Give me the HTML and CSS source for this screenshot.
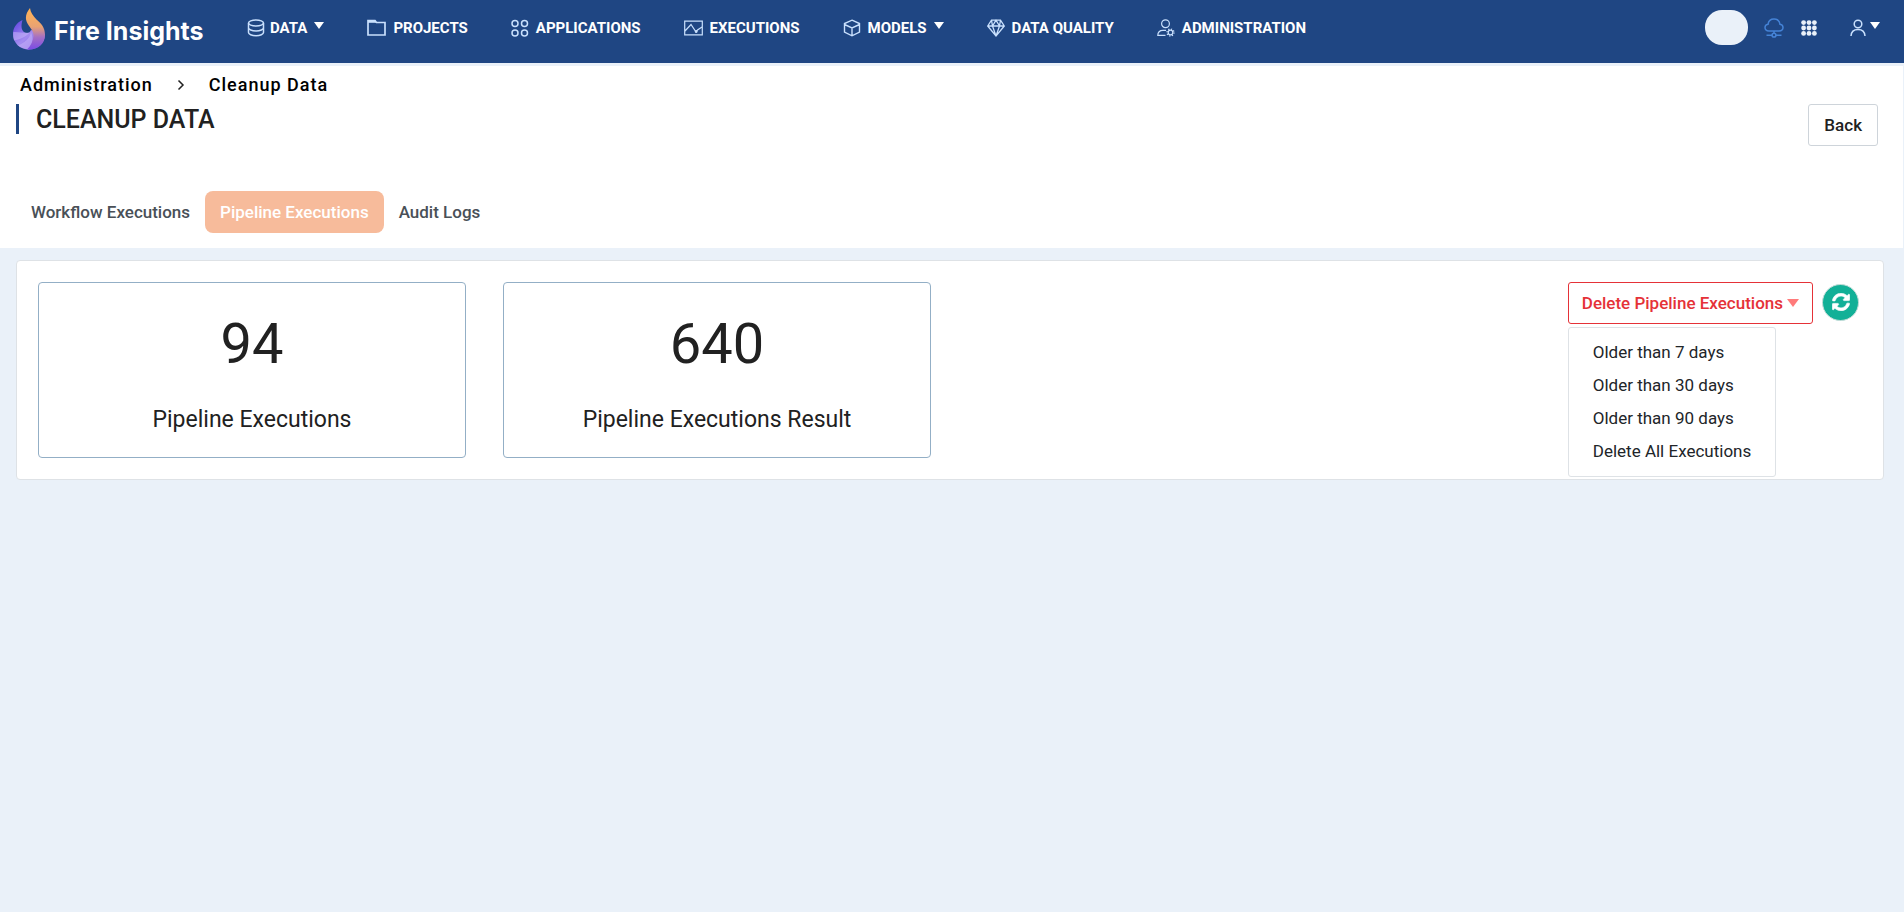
FILE: index.html
```html
<!DOCTYPE html>
<html lang="en">
<head>
<meta charset="utf-8">
<title>Fire Insights - Cleanup Data</title>
<meta name="viewport" content="width=device-width, initial-scale=1">
<link rel="stylesheet" href="styles.css">
</head>
<body>
<header class="topbar">
  <a class="brand" href="#">
    <svg class="brand-logo" width="34" height="42" viewBox="0 0 34 42" aria-hidden="true">
      <defs>
        <linearGradient id="flame" x1="0" y1="0" x2="0" y2="1">
          <stop offset="0" stop-color="#ffb454"/><stop offset=".45" stop-color="#e9a272"/><stop offset=".7" stop-color="#a56fc4"/><stop offset="1" stop-color="#7a4be6"/>
        </linearGradient>
        <linearGradient id="bowl" x1="0" y1="0" x2="1" y2="1">
          <stop offset="0" stop-color="#5a3fe0"/><stop offset=".5" stop-color="#a48cf0"/><stop offset="1" stop-color="#8458e0"/>
        </linearGradient>
      </defs>
      <path fill="url(#bowl)" d="M10.500 12C4 15 1 20 1 26c0 9 7 15.500 16 15.500S33 35 33 26L19 22c-1 3-4 4-7 2-3-2.500-3-7-1.500-12z"/>
      <path fill="#cbbbfa" opacity=".5" d="M1.300 24c4-.5 9 1 16 .8-3 4-10 7-15.200 7.700-1-2.500-1.200-5.500-.8-8.500z"/>
      <path fill="#c4b2f8" opacity=".55" d="M6 37.500c6-2.500 11.500-6.500 13-13 2.500 5 2 11.500-2 17-4.500-.2-8.500-1.700-11-4z"/>
      <path fill="url(#flame)" d="M18 0c-4 5-5.500 10-2.500 15.500 3 5 6.500 8 6 13-.5 4.500-2.500 9-6.500 13 10 1 18-5 18-14.500 0-8-4-11.500-8.500-15.500C21 7.500 18.500 4.500 18 0z"/>
    </svg>
    <span class="brand-name">Fire Insights</span>
  </a>
  <nav class="main-nav" aria-label="Main">
    <a class="nav-link nav-link-tight" href="#">
      <svg class="icon" width="18" height="18" viewBox="0 0 18 18"><ellipse cx="9" cy="4" rx="7.500" ry="3"/><path d="M1.500 4v9.500c0 1.700 3.300 3.200 7.500 3.200s7.500-1.500 7.500-3.200V4M1.500 8.700c0 1.700 3.300 3.200 7.500 3.200s7.500-1.500 7.500-3.200"/></svg>
      <span>DATA</span><i class="caret caret-data"></i>
    </a>
    <a class="nav-link" href="#">
      <svg class="icon" width="19" height="18" viewBox="0 0 19 18"><path stroke-width="1.700" d="M1 16V1.500h7L9.500 3.500H18V16z"/><path stroke-width="2" d="M1 2.800h8"/></svg>
      <span>PROJECTS</span>
    </a>
    <a class="nav-link" href="#">
      <svg class="icon" width="18" height="18" viewBox="0 0 18 18"><circle cx="4" cy="4.500" r="3"/><circle cx="13.500" cy="4.500" r="3"/><circle cx="4" cy="14" r="3"/><circle cx="13.500" cy="14" r="3"/></svg>
      <span>APPLICATIONS</span>
    </a>
    <a class="nav-link" href="#">
      <svg class="icon" width="19" height="16" viewBox="0 0 19 16"><path stroke-width="1.200" d="M.7 1.200h17.600v13.600H.7zM1 11l6-6.500 5 7.500 1.500-2L18 7"/><circle cx="12.200" cy="11.500" r=".7"/></svg>
      <span>EXECUTIONS</span>
    </a>
    <a class="nav-link" href="#">
      <svg class="icon" width="18" height="18" viewBox="0 0 18 18"><path stroke-width="1.400" d="M9 1.200l7.500 3.300v8.500L9 16.800 1.500 13V4.500zM1.500 5.500L9 9l7.500-3.500M9 9v7.800"/></svg>
      <span>MODELS</span><i class="caret"></i>
    </a>
    <a class="nav-link" href="#">
      <svg class="icon" width="18" height="18" viewBox="0 0 18 18"><path stroke-width="1.300" d="M4.500 1.200h9L17.300 7 9 17 .7 7zM.7 7h16.600M5.500 7L9 17l3.500-10L9 1.200zM4.500 1.200l1 5.800M13.500 1.200l-1 5.800"/></svg>
      <span>DATA QUALITY</span>
    </a>
    <a class="nav-link" href="#">
      <svg class="icon" width="18" height="18" viewBox="0 0 18 18"><g stroke-width="1.200"><circle cx="8.500" cy="4.700" r="3.900"/><path d="M8.500 16.400H.8c0-3.500 2-5.100 5.200-5.100h3"/><circle cx="13.500" cy="13.500" r="2.300"/></g><circle cx="13.500" cy="13.500" r="3.500" stroke-width="1.300" stroke-dasharray="1.200 1.550"/></svg>
      <span>ADMINISTRATION</span>
    </a>
  </nav>
  <div class="tools">
    <button class="pill" type="button" aria-label="Status"></button>
    <button class="tool" type="button" aria-label="Cloud">
      <svg class="cloud" width="20" height="20" viewBox="0 0 20 20"><path d="M5 13C2.500 13 1 11.500 1 9.600 1 7.800 2.300 6.500 4 6.300 4.500 3 7 1 10 1s5.500 2 6 5.300c1.700.2 3 1.500 3 3.300C19 11.500 17.500 13 15 13zM10 13v2.500M2.500 17.200h5.700M11.800 17.200h5.700"/><circle cx="10" cy="17.200" r="1.900"/></svg>
    </button>
    <button class="tool" type="button" aria-label="Apps">
      <svg class="dots" width="16" height="16" viewBox="0 0 16 16"><circle cx="2.600" cy="2.600" r="2.400"/><circle cx="8" cy="2.600" r="2.400"/><circle cx="13.400" cy="2.600" r="2.400"/><circle cx="2.600" cy="8" r="2.400"/><circle cx="8" cy="8" r="2.400"/><circle cx="13.400" cy="8" r="2.400"/><circle cx="2.600" cy="13.400" r="2.400"/><circle cx="8" cy="13.400" r="2.400"/><circle cx="13.400" cy="13.400" r="2.400"/></svg>
    </button>
    <button class="tool account" type="button" aria-label="Account">
      <svg class="icon" width="16" height="18" viewBox="0 0 16 18"><circle cx="8" cy="5" r="3.800"/><path d="M1 17c.3-4.500 3-6.500 7-6.500s6.700 2 7 6.500"/></svg>
      <i class="caret"></i>
    </button>
  </div>
</header>

<section class="page-head">
  <nav class="breadcrumb" aria-label="Breadcrumb">
    <a href="#">Administration</a>
    <svg class="crumb-arrow" width="8" height="12" viewBox="0 0 8 12" aria-hidden="true"><path d="M1.500 1.500L6 6l-4.500 4.500"/></svg>
    <span>Cleanup Data</span>
  </nav>
  <div class="title-row">
    <h1 class="title">CLEANUP DATA</h1>
    <button class="back" type="button">Back</button>
  </div>
  <div class="tabs" role="tablist">
    <button class="tab" type="button" role="tab">Workflow Executions</button>
    <button class="tab tab-active" type="button" role="tab" aria-selected="true">Pipeline Executions</button>
    <button class="tab" type="button" role="tab">Audit Logs</button>
  </div>
</section>

<main class="panel">
  <div class="cards">
    <article class="card"><p class="count">94</p><h2 class="label">Pipeline Executions</h2></article>
    <article class="card"><p class="count">640</p><h2 class="label">Pipeline Executions Result</h2></article>
  </div>
  <div class="actions">
    <div class="dropdown">
      <button class="delete" type="button" aria-expanded="true"><span>Delete Pipeline Executions</span><i class="caret caret-red"></i></button>
      <div class="menu" role="menu">
        <a class="menu-item" role="menuitem" href="#">Older than 7 days</a>
        <a class="menu-item" role="menuitem" href="#">Older than 30 days</a>
        <a class="menu-item" role="menuitem" href="#">Older than 90 days</a>
        <a class="menu-item" role="menuitem" href="#">Delete All Executions</a>
      </div>
    </div>
    <button class="refresh" type="button" aria-label="Refresh">
      <svg width="18" height="18" viewBox="0 0 512 512" aria-hidden="true"><path fill="#fff" stroke="#fff" stroke-width="18" d="M370.700 133.300C339.500 104 298.900 88 255.800 88c-77.500.1-144.300 53.200-162.800 126.900-1.300 5.400-6.100 9.100-11.700 9.100H24.100c-7.500 0-13.200-6.800-11.800-14.200C33.900 94.900 134.800 8 256 8c66.400 0 126.800 26.100 171.300 68.700L463 41C478.100 25.900 504 36.600 504 57.900V192c0 13.300-10.700 24-24 24H345.900c-21.400 0-32.100-25.900-17-41l41.800-41.700zM32 296h134.100c21.400 0 32.100 25.900 17 41l-41.800 41.800c31.300 29.300 71.800 45.300 114.900 45.300 77.400-.1 144.300-53.100 162.800-126.800 1.300-5.400 6.100-9.100 11.700-9.100h57.300c7.500 0 13.200 6.800 11.800 14.200C478.100 417.100 377.200 504 256 504c-66.400 0-126.800-26.100-171.300-68.700L49 471C33.900 486.100 8 475.400 8 454.100V320c0-13.300 10.700-24 24-24z"/></svg>
    </button>
  </div>
</main>
</body>
</html>
```

FILE: styles.css
```css
* {
  box-sizing: border-box;
}

body {
  margin: 0;
  min-height: 100vh;
  background: #eaf1f9;
  color: #212121;
  font-family: Roboto, "Liberation Sans", sans-serif;
  font-size: 17px;
  line-height: 24px;
}

a {
  color: inherit;
  text-decoration: none;
}

button {
  font: inherit;
  color: inherit;
  cursor: pointer;
}

.topbar {
  display: flex;
  align-items: flex-start;
  min-height: 63px;
  padding: 8px 24px 0 12px;
  background: #1f4683;
  color: #fff;
}

.brand {
  display: flex;
  align-items: center;
  gap: 8px;
  width: 235px;
}

.brand-name {
  padding-top: 4px;
  font-family: Inter, "Open Sans", sans-serif;
  font-size: 25px;
  font-weight: 700;
  line-height: 32px;
}

.main-nav {
  display: flex;
  gap: 43px;
  flex: 1;
  padding-top: 8px;
}

.nav-link {
  display: flex;
  align-items: center;
  gap: 7px;
  font-size: 15px;
  font-weight: 700;
  line-height: 24px;
  white-space: nowrap;
}

.nav-link-tight {
  gap: 5px;
}

.icon,
.cloud {
  flex: none;
  fill: none;
  stroke: #c9e0fd;
  stroke-width: 1.5;
}

.cloud {
  stroke: #4583d6;
}

.dots {
  fill: #eaf1f9;
  stroke: none;
}

.caret {
  border: 5px solid transparent;
  border-top: 7px solid #fff;
  border-bottom: 0;
  margin-bottom: 5px;
}

.caret-data {
  margin-left: 2px;
}

.tools {
  display: flex;
  align-items: center;
  padding-top: 2px;
}

.pill {
  width: 43px;
  height: 35px;
  margin-right: 16px;
  border: 0;
  border-radius: 17px;
  background: #eaf1f9;
}

.tool {
  display: flex;
  align-items: center;
  margin-right: 17px;
  padding: 0;
  border: 0;
  background: none;
}

.account {
  gap: 4px;
  margin: 0 0 0 16px;
}

.page-head {
  margin: 3px 1px 0 0;
  padding: 7px 25px 15px 16px;
  background: #fff;
}

.breadcrumb {
  display: flex;
  align-items: center;
  padding-left: 4px;
  color: #000;
  font-size: 18px;
  font-weight: 500;
  letter-spacing: 1px;
}

.crumb-arrow {
  margin: 0 24px;
  fill: none;
  stroke: #222;
  stroke-width: 1.5;
}

.title-row {
  display: flex;
  align-items: flex-start;
  justify-content: space-between;
  margin-top: 7px;
}

.title {
  margin: 0;
  padding: 2px 0 0 17px;
  border-left: 3px solid #1f4683;
  font-size: 25px;
  font-weight: 500;
  line-height: 28px;
}

.back {
  padding: 8px 15px;
  border: 1px solid #ced4da;
  border-radius: 3px;
  background: #fff;
  font-weight: 500;
}

.tabs {
  display: flex;
  margin-top: 45px;
}

.tab {
  padding: 9px 15px;
  border: 0;
  border-radius: 8px;
  background: none;
  color: #495057;
  font-weight: 500;
}

.tab-active {
  background: #f7bb9b;
  color: #fff;
}

.panel {
  display: flex;
  justify-content: space-between;
  gap: 36px;
  margin: 12px 20px 16px 16px;
  padding: 21px 24px 21px 21px;
  border: 1px solid #dee2e6;
  border-radius: 4px;
  background: #fff;
}

.cards {
  display: flex;
  flex: 1;
  gap: 37px;
}

.card {
  flex: 0 1 428px;
  padding: 31px 16px 22px;
  border: 1px solid #93afc6;
  border-radius: 4px;
  text-align: center;
}

.count {
  margin: 0;
  font-size: 56px;
  line-height: 60px;
}

.label {
  margin: 31px 0 0;
  font-size: 23px;
  font-weight: 400;
  line-height: 30px;
}

.actions {
  display: flex;
  align-items: flex-start;
  gap: 9px;
}

.dropdown {
  position: relative;
}

.delete {
  display: flex;
  align-items: center;
  gap: 4px;
  padding: 8px 13px;
  border: 1px solid #e53238;
  border-radius: 3px;
  background: #fff;
  color: #e53238;
  font-weight: 500;
}

.caret-red {
  border-width: 8px 6px 0;
  border-top-color: #ff7b7b;
  margin: 0;
}

.menu {
  position: absolute;
  top: 100%;
  left: 0;
  margin-top: 3px;
  padding: 8px 0;
  border: 1px solid #dee2e6;
  border-radius: 3px;
  background: #fff;
}

.menu-item {
  display: block;
  padding: 4px 24px 5px;
  color: #212529;
  white-space: nowrap;
}

.refresh {
  display: grid;
  place-items: center;
  width: 37px;
  height: 37px;
  margin-top: 2px;
  padding: 0 0 2px;
  border: 1px solid #c5ddd9;
  border-radius: 50%;
  background: #12b097;
}
```
